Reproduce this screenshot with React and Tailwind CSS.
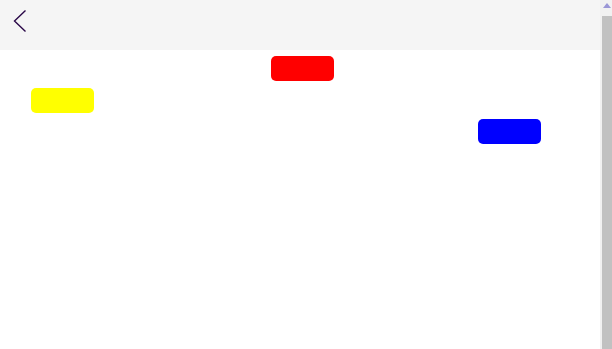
export default function App() {
  return (
    <div className="flex h-[349px] w-[612px] overflow-hidden bg-white" style={{ fontFamily: '"Liberation Sans", Arial, sans-serif' }}>
      <div className="flex w-[600px] flex-col">
        <header className="flex h-[50px] items-center bg-[#f5f5f5]">
          <svg width="40" height="50" viewBox="0 0 40 50" className="shrink-0">
            <polyline points="25.5,10.5 14.5,21 25.5,31.5" fill="none" stroke="#2a0848" strokeWidth="1.4" />
          </svg>
        </header>
        <div className="flex flex-col">
          <div className="ml-[271px] mt-[6px] h-[25px] w-[63px] rounded-[5px] bg-[#ff0000]" />
          <div className="ml-[31px] mt-[7px] h-[25px] w-[63px] rounded-[5px] bg-[#ffff00]" />
          <div className="ml-[478px] mt-[6px] h-[25px] w-[63px] rounded-[5px] bg-[#0000ff]" />
        </div>
      </div>
      <div className="flex w-[12px] flex-col bg-[#f1f1f1]">
        <div className="flex h-[16px] items-start justify-end pt-[3px] pr-[1px]">
          <svg width="8" height="6" viewBox="0 0 8 6">
            <polygon points="4,0 8,5 0,5" fill="#9a96d6" />
          </svg>
        </div>
        <div className="ml-[2px] flex-1 bg-[#c1c1c1]" />
      </div>
    </div>
  );
}
